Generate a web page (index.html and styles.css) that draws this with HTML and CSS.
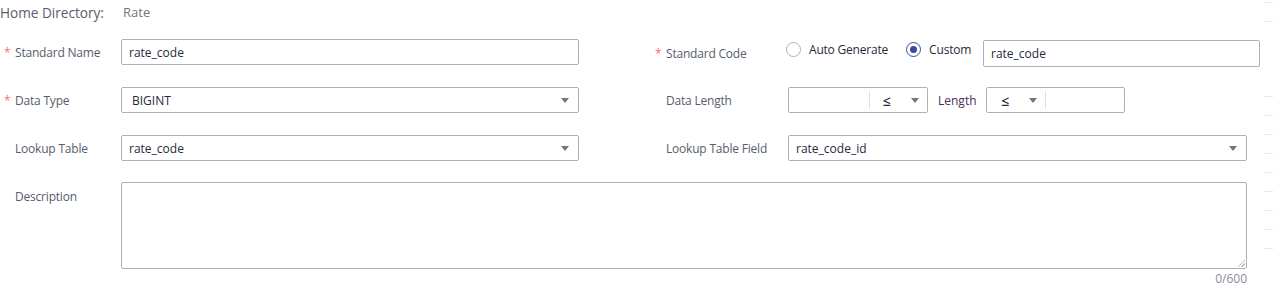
FILE: index.html
```html
<!DOCTYPE html>
<html lang="en">
<head>
    <meta charset="UTF-8">
    <meta name="viewport" content="width=device-width, initial-scale=1.0">
    <title>Standard</title>
    <link rel="stylesheet" href="styles.css">
</head>
<body>
    <div class="page">
        <div class="crumb">
            <span class="crumbLabel">Home Directory:</span>
            <span class="crumbValue">Rate</span>
        </div>

        <form class="standardForm">
            <div class="row">
                <div class="half">
                    <label class="label"><span class="star">*</span>Standard Name</label>
                    <div class="input wide">rate_code</div>
                </div>
                <div class="half right">
                    <label class="label rightLabel first"><span class="star">*</span>Standard Code</label>
                    <div class="radioGroup">
                        <span class="radio"><span class="dot"></span>Auto Generate</span>
                        <span class="radio checked"><span class="dot"></span>Custom</span>
                    </div>
                    <div class="input code">rate_code</div>
                </div>
            </div>

            <div class="row">
                <div class="half">
                    <label class="label"><span class="star">*</span>Data Type</label>
                    <div class="input wide select"><span class="val">BIGINT</span><span class="arrow"></span></div>
                </div>
                <div class="half right">
                    <label class="label rightLabel">Data Length</label>
                    <div class="input combo">
                        <span class="comboInput"></span>
                        <span class="divider"></span>
                        <span class="op">≤</span>
                        <span class="arrow"></span>
                    </div>
                    <span class="lengthText">Length</span>
                    <div class="input combo second">
                        <span class="op">≤</span>
                        <span class="arrow"></span>
                        <span class="divider"></span>
                        <span class="comboInput"></span>
                    </div>
                </div>
            </div>

            <div class="row">
                <div class="half">
                    <label class="label">Lookup Table</label>
                    <div class="input wide select"><span class="val">rate_code</span><span class="arrow"></span></div>
                </div>
                <div class="half right">
                    <label class="label rightLabel">Lookup Table Field</label>
                    <div class="input field select"><span class="val">rate_code_id</span><span class="arrow"></span></div>
                </div>
            </div>

            <div class="descRow">
                <label class="label">Description</label>
                <div class="descBox">
                    <div class="textarea"><span class="grip"></span></div>
                    <div class="counter">0/600</div>
                </div>
            </div>
        </form>
    </div>
    <div class="edgeLines"></div>
</body>
</html>
```

FILE: styles.css
```css
*{
    margin: 0px;
    box-sizing: border-box;
}
body{
    width: 1273px;
    height: 285px;
    background-color: white;
    font-family: 'Open Sans', 'Noto Sans', sans-serif;
    font-size: 12px;
    color: #252b3a;
    overflow: hidden;
    position: relative;
}
.crumb{
    display: flex;
    height: 24px;
    align-items: center;
    font-size: 13.6px;
}
.crumbLabel{
    color: #575d6c;
    width: 123px;
}
.crumbValue{
    color: #71757f;
    font-size: 13px;
}
.standardForm{
    margin-top: 15px;
}
.row{
    display: flex;
    height: 26px;
    margin-bottom: 22px;
}
.half{
    display: flex;
    align-items: center;
    width: 655px;
}
.half.right{
    width: 618px;
}
.label{
    color: #575d6c;
    width: 121px;
    padding-left: 15px;
    flex-shrink: 0;
    letter-spacing: -0.2px;
}
.rightLabel{
    padding-left: 11px;
    width: 133px;
}
.star{
    display: inline-block;
    width: 11px;
    margin-left: -11px;
    color: #f66f6a;
}
.input{
    height: 26px;
    border: 1px solid #adb0b8;
    border-radius: 2px;
    display: flex;
    align-items: center;
    padding-left: 7px;
    background-color: white;
}
.wide{
    width: 458px;
}
.select{
    justify-content: space-between;
    padding-right: 9px;
}
.row:nth-child(2) .select .val{
    padding-left: 3px;
}
.arrow{
    width: 0;
    height: 0;
    border-left: 4px solid transparent;
    border-right: 4px solid transparent;
    border-top: 5px solid #71757f;
}
.first{
    position: relative;
    top: 1px;
}
.radioGroup{
    display: flex;
    align-self: flex-start;
    margin-top: 2px;
    margin-left: -2px;
    gap: 18px;
}
.radio{
    display: flex;
    align-items: center;
    color: #252b3a;
    letter-spacing: -0.2px;
}
.dot{
    width: 15px;
    height: 15px;
    border: 1px solid #adb0b8;
    border-radius: 50%;
    margin-right: 8px;
    position: relative;
}
.checked .dot{
    border-color: #3b4a9a;
}
.checked .dot::after{
    content: "";
    position: absolute;
    left: 3px;
    top: 3px;
    width: 7px;
    height: 7px;
    border-radius: 50%;
    background-color: #3b4a9a;
}
.code{
    width: 277px;
    margin-left: auto;
    margin-right: 13px;
    margin-top: 2px;
    height: 27px;
}
.combo{
    width: 140px;
    padding-left: 0px;
    padding-right: 0px;
}
.comboInput{
    width: 80px;
}
.divider{
    width: 1px;
    height: 18px;
    background-color: #dfe1e6;
}
.op{
    font-size: 14px;
    font-weight: 600;
    margin-left: 13px;
    margin-right: 20px;
}
.combo .arrow{
    margin-right: 4px;
}
.lengthText{
    color: #4a2f5c;
    margin-left: 10px;
    margin-right: 9px;
}
.second{
    width: 139px;
}
.second .op{
    margin-left: 15px;
    margin-right: 19px;
}
.second .arrow{
    margin-right: 8px;
}
.second .comboInput{
    flex: 1;
}
.field{
    width: 459px;
}
.descRow{
    display: flex;
    margin-top: -1px;
}
.descRow .label{
    padding-top: 6px;
}
.descBox{
    width: 1126px;
}
.textarea{
    height: 87px;
    border: 1px solid #adb0b8;
    border-radius: 2px;
    position: relative;
}
.grip{
    position: absolute;
    right: 1px;
    bottom: 1px;
    width: 7px;
    height: 7px;
    background: linear-gradient(135deg, transparent 45%, #b5b8bf 45%, #b5b8bf 55%, transparent 55%, transparent 70%, #b5b8bf 70%, #b5b8bf 80%, transparent 80%);
}
.counter{
    text-align: right;
    color: #8a8e99;
    line-height: 16px;
    margin-top: 2px;
}
.edgeLines{
    position: absolute;
    right: 0px;
    top: 0px;
    width: 9px;
    height: 250px;
    background:
        linear-gradient(#e8e8e8, #e8e8e8) 0 2px / 100% 1px no-repeat,
        linear-gradient(#e8e8e8, #e8e8e8) 0 21px / 100% 1px no-repeat,
        repeating-linear-gradient(transparent 0px, transparent 18px, #e8e8e8 18px, #e8e8e8 19px) 0 78px / 100% 172px no-repeat;
}
```
